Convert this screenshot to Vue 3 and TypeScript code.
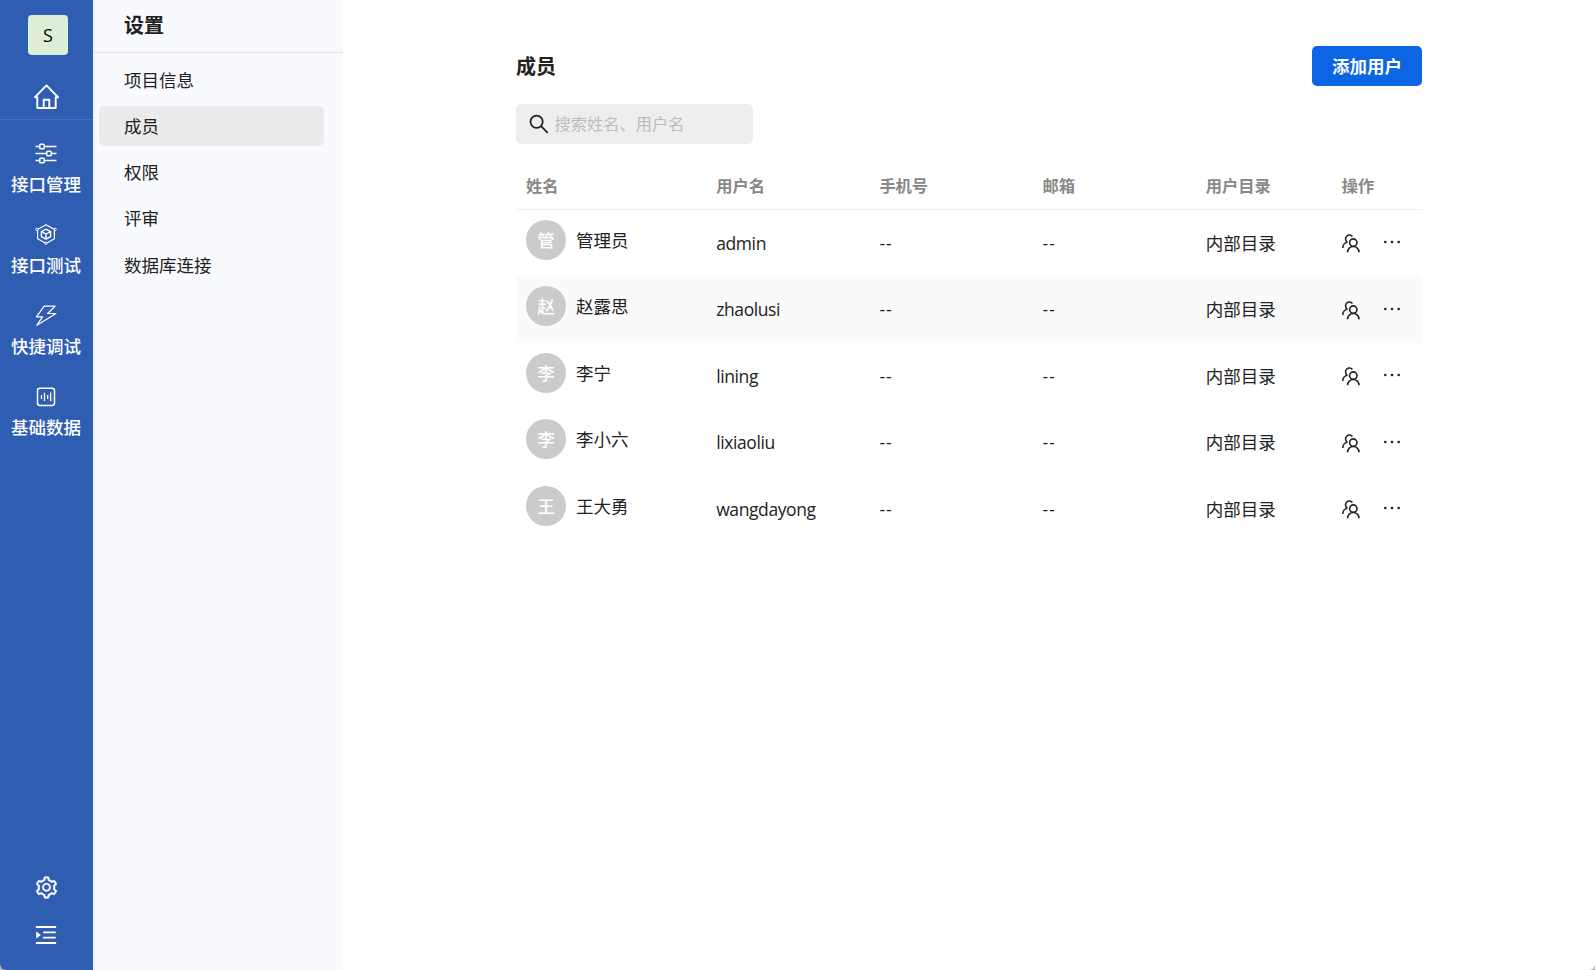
<script setup lang="ts">
interface Member {
  name: string
  account: string
}

const navItems = [
  { key: 'manage', label: '接口管理' },
  { key: 'test', label: '接口测试' },
  { key: 'debug', label: '快捷调试' },
  { key: 'data', label: '基础数据' },
]
const settings = ['项目信息', '成员', '权限', '评审', '数据库连接']
const activeSetting = '成员'
const columns = ['姓名', '用户名', '手机号', '邮箱', '用户目录', '操作']
const members: Member[] = [
  { name: '管理员', account: 'admin' },
  { name: '赵露思', account: 'zhaolusi' },
  { name: '李宁', account: 'lining' },
  { name: '李小六', account: 'lixiaoliu' },
  { name: '王大勇', account: 'wangdayong' },
]
const hovered = 'zhaolusi'
</script>

<template>
  <div class="window">
    <nav class="rail">
      <div class="logo">S</div>
      <div class="home">
        <svg width="27" height="27" viewBox="0 0 27 27" fill="none" stroke="#fff" stroke-width="1.9" stroke-linejoin="round" stroke-linecap="round">
          <path d="M4.3 14.2H2L13.5 2.4 25 14.2h-2.3M4.3 14.2v10.8h18.4V14.2M10.7 25v-8.3h5.6V25" />
        </svg>
      </div>
      <a v-for="item in navItems" :key="item.key" class="nav-item">
        <svg class="nav-icon" width="24" height="24" viewBox="0 0 24 24" fill="none" stroke="#fff" stroke-linejoin="round">
          <g v-if="item.key === 'manage'" stroke-width="1.5">
            <path d="M1.5 5.5h4.3M10.2 5.5h12.3M1.5 12.5h11.3M17.2 12.5h5.3M1.5 19.5h4.3M10.2 19.5h12.3" />
            <rect x="5.8" y="3.2" width="4.4" height="4.6" rx=".8" />
            <rect x="12.8" y="10.2" width="4.4" height="4.6" rx=".8" />
            <rect x="5.8" y="17.2" width="4.4" height="4.6" rx=".8" />
          </g>
          <g v-else-if="item.key === 'test'" stroke-width="1.2">
            <path d="M12 2.8 20.4 7.5V16.7L12 21.4 3.6 16.7V7.5Z" />
            <path d="m12 7.2 4.6 2.4v5.1L12 17.2l-4.6-2.5V9.6ZM7.4 9.6 12 12l4.6-2.4M12 12v5.2" stroke-width="1.4" />
            <g fill="#2f5db1" stroke-width="1">
              <circle cx="2.9" cy="7.3" r="1.2" />
              <circle cx="21.1" cy="7.3" r="1.2" />
              <circle cx="12" cy="21.2" r="1.2" />
            </g>
          </g>
          <path v-else-if="item.key === 'debug'" stroke-width="1.2" d="M10.2 3.1h11L13.6 10.5h8.4L2.9 22.2l5.6-8.4H2.4Z" />
          <g v-else stroke-width="1.5">
            <rect x="3.5" y="4.2" width="17" height="17.2" rx="2.4" />
            <path d="M7.5 10.9v4M10.5 8.7v8.4M13.7 10.9v4M16.7 8.5v8.8" stroke-width="1.3" />
          </g>
        </svg>
        <span>{{ item.label }}</span>
      </a>
      <div class="rail-bottom">
        <svg width="25" height="25" viewBox="0 0 1024 1024" fill="#fff" stroke="#fff" stroke-width="12">
          <path d="M924.8 625.7l-65.5-56c3.1-19 4.7-38.4 4.7-57.8s-1.6-38.8-4.7-57.8l65.5-56a32.03 32.03 0 009.3-35.2l-.9-2.6a443.74 443.74 0 00-79.7-137.9l-1.8-2.1a32.12 32.12 0 00-35.1-9.5l-81.3 28.9c-30-24.6-63.5-44-99.7-57.6l-15.7-85a32.05 32.05 0 00-25.8-25.7l-2.7-.5c-52.1-9.4-106.9-9.4-159 0l-2.7.5a32.05 32.05 0 00-25.8 25.7l-15.8 85.4a351.86 351.86 0 00-99 57.4l-81.9-29.1a32 32 0 00-35.1 9.5l-1.8 2.1a446.02 446.02 0 00-79.7 137.9l-.9 2.6c-4.5 12.5-.8 26.5 9.3 35.2l66.3 56.6c-3.1 18.8-4.6 38-4.6 57.1 0 19.2 1.5 38.4 4.6 57.1L99 625.5a32.03 32.03 0 00-9.3 35.2l.9 2.6c18.1 50.4 44.9 96.9 79.7 137.9l1.8 2.1a32.12 32.12 0 0035.1 9.5l81.9-29.1c29.8 24.5 63.1 43.9 99 57.4l15.8 85.4a32.05 32.05 0 0025.8 25.7l2.7.5a449.4 449.4 0 00159 0l2.7-.5a32.05 32.05 0 0025.8-25.7l15.7-85a350 350 0 0099.7-57.6l81.3 28.9a32 32 0 0035.1-9.5l1.8-2.1c34.8-41.1 61.6-87.5 79.7-137.9l.9-2.6c4.5-12.3.8-26.3-9.3-35zM788.3 465.9c2.5 15.1 3.8 30.6 3.8 46.1s-1.3 31-3.8 46.1l-6.6 40.1 74.7 63.9a370.03 370.03 0 01-42.6 73.6L721 702.8l-31.4 25.8c-23.9 19.6-50.5 35-79.3 45.8l-38.1 14.3-17.9 97a377.5 377.5 0 01-85 0l-17.9-97.2-37.8-14.5c-28.5-10.8-55-26.2-78.7-45.7l-31.4-25.9-93.4 33.2c-17-22.9-31.2-47.6-42.6-73.6l75.5-64.5-6.5-40c-2.4-14.9-3.7-30.3-3.7-45.5 0-15.3 1.2-30.6 3.7-45.5l6.5-40-75.5-64.5c11.3-26.1 25.6-50.7 42.6-73.6l93.4 33.2 31.4-25.9c23.7-19.5 50.2-34.9 78.7-45.7l37.9-14.3 17.9-97.2c28.1-3.2 56.8-3.2 85 0l17.9 97 38.1 14.3c28.7 10.8 55.4 26.2 79.3 45.8l31.4 25.8 92.8-32.9c17 22.9 31.2 47.6 42.6 73.6L781.8 426l6.5 39.9zM512 326c-97.2 0-176 78.8-176 176s78.8 176 176 176 176-78.8 176-176-78.8-176-176-176zm79.2 255.2A111.6 111.6 0 01512 614c-29.9 0-58-11.7-79.2-32.8A111.6 111.6 0 01400 502c0-29.9 11.7-58 32.8-79.2C454 401.6 482.1 390 512 390c29.9 0 58 11.6 79.2 32.8A111.6 111.6 0 01624 502c0 29.9-11.7 58-32.8 79.2z" />
        </svg>
        <svg width="26" height="26" viewBox="0 0 1024 1024" fill="#fff">
          <path d="M408 442h480c4.4 0 8-3.6 8-8v-56c0-4.4-3.6-8-8-8H408c-4.4 0-8 3.6-8 8v56c0 4.4 3.6 8 8 8zm-8 204c0 4.4 3.6 8 8 8h480c4.4 0 8-3.6 8-8v-56c0-4.4-3.6-8-8-8H408c-4.4 0-8 3.6-8 8v56zm504-486H120c-4.4 0-8 3.6-8 8v56c0 4.4 3.6 8 8 8h784c4.4 0 8-3.6 8-8v-56c0-4.4-3.6-8-8-8zm0 632H120c-4.4 0-8 3.6-8 8v56c0 4.4 3.6 8 8 8h784c4.4 0 8-3.6 8-8v-56c0-4.4-3.6-8-8-8zM142.4 642.1L298.7 519a8.84 8.84 0 000-13.9L142.4 381.9c-5.8-4.6-14.4-.5-14.4 6.9v246.3a8.9 8.9 0 0014.4 7z" />
        </svg>
      </div>
    </nav>

    <aside class="panel">
      <h2 class="panel-title">设置</h2>
      <ul class="menu">
        <li v-for="s in settings" :key="s" :class="{ active: s === activeSetting }">{{ s }}</li>
      </ul>
    </aside>

    <main class="content">
      <header class="head">
        <h1>成员</h1>
        <button class="add">添加用户</button>
      </header>
      <label class="search">
        <svg width="20" height="20" viewBox="0 0 20 20" fill="none" stroke="#222" stroke-width="1.8">
          <circle cx="7.6" cy="7.7" r="6.1" />
          <path d="m12.1 12.2 6.6 6.6" />
        </svg>
        <span>搜索姓名、用户名</span>
      </label>
      <div class="table">
        <div class="row thead">
          <div v-for="c in columns" :key="c">{{ c }}</div>
        </div>
        <div v-for="m in members" :key="m.account" class="row" :class="{ hovered: m.account === hovered }">
          <div class="person">
            <span class="avatar">{{ m.name[0] }}</span>
            <span>{{ m.name }}</span>
          </div>
          <div class="cell latin">{{ m.account }}</div>
          <div class="cell dash">--</div>
          <div class="cell dash">--</div>
          <div class="cell">内部目录</div>
          <div class="actions">
            <svg width="20" height="20" viewBox="0 0 20 20" fill="none" stroke="#222" stroke-width="1.6">
              <circle cx="12.3" cy="9.6" r="3.7" />
              <path d="M6.6 19.2a5.7 5.7 0 0 1 11.4 0M11.4 3.6A3.8 3.8 0 1 0 6.2 9M6.5 9.2A5.6 5.6 0 0 0 1.8 14.9" />
            </svg>
            <svg class="more" width="18" height="6" viewBox="0 0 18 6" fill="#222">
              <circle cx="2.3" cy="3" r="1.3" /><circle cx="9" cy="3" r="1.3" /><circle cx="15.7" cy="3" r="1.3" />
            </svg>
          </div>
        </div>
      </div>
    </main>
  </div>
</template>

<style>
body {
  background: #b5b5b5;
}
</style>

<style scoped>
.window {
  display: flex;
  height: 970px;
  overflow: hidden;
  background: #fff;
  border-radius: 0 0 6px 6px;
  color: #222;
  font: 17.5px/26px "Noto Sans CJK SC", sans-serif;
}
.rail {
  display: flex;
  flex-direction: column;
  width: 93px;
  flex: none;
  box-sizing: border-box;
  padding-top: 15px;
  background: #2f5db1;
  color: #fff;
}
.logo {
  width: 40px;
  height: 40px;
  margin-left: 28px;
  border-radius: 4px;
  background: #dfeed9;
  color: #000;
  font: 400 18px/40px "Open Sans", sans-serif;
  text-align: center;
}
.home {
  height: 65px;
  box-sizing: border-box;
  padding: 28px 0 0 33px;
  border-bottom: 1px solid #446db9;
}
.nav-item {
  display: flex;
  flex-direction: column;
  align-items: center;
  height: 81.1px;
  box-sizing: border-box;
  padding: 21px 1px 0 0;
  font-weight: 500;
}
.nav-icon {
  margin-bottom: 6px;
}
.nav-item span {
  white-space: nowrap;
}
.rail-bottom {
  display: flex;
  flex-direction: column;
  align-items: center;
  gap: 22px;
  margin-top: auto;
  padding: 0 1px 22px 0;
}
.panel {
  width: 250px;
  flex: none;
  background: #f9fafe;
  box-shadow: inset 4px 0 4px -3px #00000010;
}
.panel-title {
  height: 53px;
  box-sizing: border-box;
  margin: 0;
  padding-left: 31px;
  border-bottom: 1px solid #e0e0e0;
  font-size: 20px;
  line-height: 49px;
  font-weight: 700;
}
.menu {
  display: flex;
  flex-direction: column;
  gap: 6.25px;
  margin: 0;
  padding: 6.7px 19px 0 6px;
  list-style: none;
}
.menu li {
  height: 40px;
  padding-left: 25px;
  border-radius: 5px;
  line-height: 40px;
}
.menu .active {
  background: #ebebeb;
}
.content {
  width: 906px;
  padding: 46px 0 0 173px;
}
.head {
  display: flex;
  align-items: center;
  justify-content: space-between;
  height: 40px;
}
h1 {
  margin: 0;
  font-size: 20px;
  font-weight: 700;
}
.add {
  width: 110px;
  height: 40px;
  padding: 0;
  border: 0;
  border-radius: 5px;
  background: #0c66e4;
  color: #fff;
  font: 700 17.5px/40px "Noto Sans CJK SC", sans-serif;
}
.search {
  display: flex;
  align-items: center;
  gap: 5.5px;
  width: 237px;
  height: 40px;
  box-sizing: border-box;
  margin-top: 18px;
  padding-left: 13px;
  border-radius: 5px;
  background: #eee;
  color: #bdbdbd;
  font-size: 16.25px;
}
.search span {
  padding-bottom: 2px;
}
.table {
  margin-top: 18px;
}
.row {
  display: grid;
  grid-template-columns: 190.2px 163.2px 163.2px 163.2px 136px 90.2px;
  height: 66.5px;
}
.row > div {
  padding-left: 10px;
}
.thead {
  height: 47.75px;
  box-sizing: border-box;
  border-bottom: 1px solid #eee;
  color: #888;
  font-size: 16.25px;
  font-weight: 700;
  line-height: 46px;
}
.hovered {
  background: #fafafa;
}
.person {
  display: flex;
  align-items: center;
  gap: 10px;
  height: 40px;
  padding-top: 10px;
}
.avatar {
  width: 40px;
  height: 40px;
  border-radius: 50%;
  background: #cbcbcb;
  color: #fff;
  font-weight: 500;
  line-height: 40px;
  text-align: center;
}
.cell {
  line-height: 65.8px;
}
.latin,
.dash {
  line-height: 67.8px;
  font-family: "Open Sans", sans-serif;
}
.latin {
  letter-spacing: -0.4px;
}
.dash {
  letter-spacing: 1px;
}
.row > .actions {
  display: flex;
  align-items: center;
  gap: 22px;
  padding: 0 0 0.5px 9px;
}
.more {
  margin-top: -2px;
}
</style>
